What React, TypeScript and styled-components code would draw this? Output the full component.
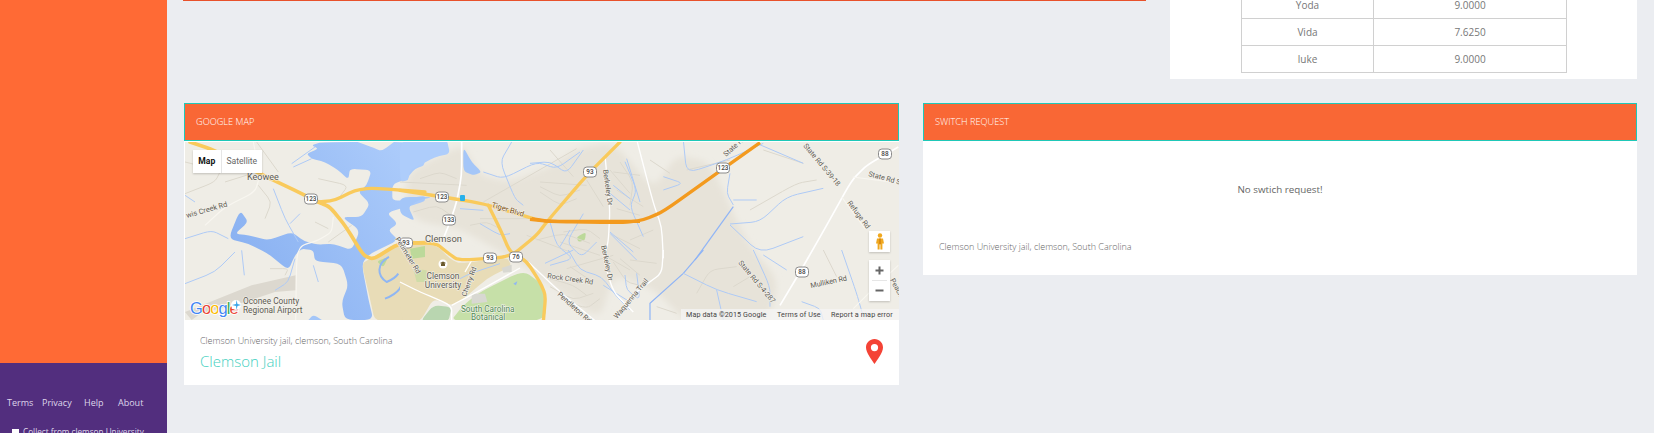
import React from "react";
import styled, { createGlobalStyle } from "styled-components";

const Global = createGlobalStyle`
  html, body { margin: 0; padding: 0; height: 100%; overflow: hidden; background: #ebedf1; }
  body { font-family: "Open Sans", "Liberation Sans", sans-serif; }
`;

const Page = styled.div`
  display: flex;
  width: 1654px;
  height: 433px;
  overflow: hidden;
  background: #ebedf1;
`;
const Sidebar = styled.aside`
  width: 167px;
  flex: none;
  display: flex;
  flex-direction: column;
`;
const SideFill = styled.div`
  flex: 1;
  background: #ff6a35;
`;
const SideFoot = styled.div`
  height: 70px;
  flex: none;
  background: #522e7e;
  color: #ded6ea;
  font-size: 9px;
  overflow: hidden;
`;
const FootLinks = styled.div`
  display: flex;
  padding: 33px 0 0 7px;
  line-height: 14px;
`;
const FootLink = styled.span<{ $w: number }>`
  width: ${(p) => p.$w}px;
  flex: none;
`;
const Collect = styled.div`
  display: flex;
  align-items: center;
  gap: 4px;
  padding: 15px 0 0 12px;
  font-size: 8.2px;
  line-height: 14px;
  white-space: nowrap;
`;
const Tick = styled.span`
  width: 7px;
  height: 6px;
  background: #fff;
`;
const Main = styled.main`
  flex: 1;
  min-width: 0;
  padding: 0 17px 0 17px;
  display: flex;
  flex-direction: column;
  gap: 24px;
`;
const TopRow = styled.div`
  display: flex;
  justify-content: space-between;
  height: 79px;
  flex: none;
`;
const TopPanel = styled.div`
  width: 963px;
  height: 1px;
  margin-left: -1px;
  background: #e8512b;
`;
const ScoreCard = styled.section`
  width: 467px;
  height: 79px;
  background: #fff;
  overflow: hidden;
`;
const Scores = styled.table`
  border-collapse: collapse;
  table-layout: fixed;
  width: 326px;
  margin: -9px 0 0 71px;
  font-size: 10px;
  color: #777;
  td {
    border: 1px solid #d0d0d0;
    height: 26px;
    padding: 0;
    text-align: center;
  }
`;
const Panels = styled.div`
  display: grid;
  grid-template-columns: 715px 714px;
  column-gap: 24px;
  align-items: start;
`;
const Panel = styled.section`
  background: #fff;
`;
const PanelHead = styled.header`
  height: 38px;
  box-sizing: border-box;
  border: 1px solid #1fc8b8;
  background: #f96735;
  color: #fff;
  font-size: 9.2px;
  font-weight: 300;
  line-height: 36px;
  padding-left: 11px;
`;
const MapBox = styled.div`
  position: relative;
  height: 178px;
  margin: 1px 0 0 1px;
  overflow: hidden;
  background: #efede6;
`;
const MapSvg = styled.svg`
  display: block;
  width: 714px;
  height: 178px;
`;
const MapType = styled.div`
  position: absolute;
  left: 8px;
  top: 8px;
  width: 69px;
  height: 23px;
  display: flex;
  background: #fff;
  box-shadow: 0 1px 2px rgba(0, 0, 0, 0.2);
  font-family: Roboto, sans-serif;
  font-size: 8.6px;
  line-height: 23px;
  text-align: center;
`;
const MapTab = styled.span<{ $active?: boolean }>`
  color: ${(p) => (p.$active ? "#111" : "#666")};
  font-weight: ${(p) => (p.$active ? 700 : 400)};
  width: ${(p) => (p.$active ? 28 : 41)}px;
  ${(p) => (p.$active ? "border-right: 1px solid #e6e6e6;" : "")}
`;
const MapButton = styled.div`
  position: absolute;
  left: 684px;
  top: 89px;
  width: 21px;
  height: 21px;
  background: #fff;
  box-shadow: 0 1px 2px rgba(0, 0, 0, 0.2);
  display: flex;
  align-items: center;
  justify-content: center;
`;
const ZoomBox = styled.div`
  position: absolute;
  left: 684px;
  top: 118px;
  width: 21px;
  height: 41px;
  background: #fff;
  box-shadow: 0 1px 2px rgba(0, 0, 0, 0.2);
  display: flex;
  flex-direction: column;
  align-items: center;
  justify-content: space-around;
  &::after {
    content: "";
    position: absolute;
    left: 3px;
    right: 3px;
    top: 20px;
    height: 1px;
    background: #e6e6e6;
  }
`;
const Attribution = styled.div`
  position: absolute;
  right: 0;
  bottom: 0;
  height: 11px;
  width: 218px;
  background: rgba(245, 245, 245, 0.72);
  display: flex;
  font-family: Roboto, sans-serif;
  font-size: 7.2px;
  line-height: 11px;
  color: #444;
  white-space: nowrap;
  letter-spacing: 0.1px;
`;
const AttrItem = styled.span<{ $w: number }>`
  width: ${(p) => p.$w}px;
  padding-left: 5px;
  box-sizing: border-box;
  flex: none;
`;
const MapFoot = styled.div`
  height: 65px;
  display: flex;
  justify-content: space-between;
  padding: 14px 16px 0 16px;
  box-sizing: border-box;
`;
const Address = styled.div`
  font-size: 9px;
  font-weight: 300;
  color: #666;
  line-height: 14px;
`;
const PlaceName = styled.div`
  font-size: 15px;
  font-weight: 300;
  color: #3fd0c0;
  line-height: 22px;
  margin-top: 2px;
`;
const Pin = styled.svg`
  width: 17px;
  height: 25px;
  margin-top: 5px;
`;
const SwitchBody = styled.div`
  height: 134px;
  padding: 0 16px;
  box-sizing: border-box;
  display: flex;
  flex-direction: column;
`;
const EmptyNote = styled.div`
  height: 97px;
  line-height: 98px;
  text-align: center;
  font-size: 9.8px;
  color: #666;
`;
const SwitchAddress = styled(Address)`
  margin-top: 2px;
`;

/* Rounds the corners of a polyline so map features read as organic shapes. */
const K = 0.3;
const smooth = (d: string) =>
  d
    .split(/(?=M)/)
    .map((sub) => {
      const closed = /Z\s*$/.test(sub);
      const pts = (sub.match(/-?[\d.]+,-?[\d.]+/g) || []).map((s) => s.split(",").map(Number));
      if (pts.length < 3) return sub;
      const toward = (a: number[], b: number[]) => `${a[0] + (b[0] - a[0]) * K},${a[1] + (b[1] - a[1]) * K}`;
      const n = pts.length;
      if (closed) {
        let out = `M${toward(pts[0], pts[n - 1])}`;
        pts.forEach((p, i) => {
          const next = pts[(i + 1) % n];
          const prev = pts[(i + n - 1) % n];
          out += ` L${toward(p, prev)} Q${p[0]},${p[1]} ${toward(p, next)}`;
        });
        return out + " Z";
      }
      let out = `M${pts[0][0]},${pts[0][1]}`;
      for (let i = 1; i < n - 1; i++) {
        out += ` L${toward(pts[i], pts[i - 1])} Q${pts[i][0]},${pts[i][1]} ${toward(pts[i], pts[i + 1])}`;
      }
      return out + ` L${pts[n - 1][0]},${pts[n - 1][1]}`;
    })
    .join(" ");

const P = ({ d, ...rest }: React.SVGProps<SVGPathElement> & { d: string }) => <path d={smooth(d)} {...rest} />;

const Z = ({ x, y, children }: { x: number; y: number; children: React.ReactNode }) => (
  <g transform={`translate(${x} ${y}) scale(0.3333)`}>{children}</g>
);

const Lbl = ({ x, y, r = 0, s = 7.4, c = "#5d5a52", children, a }: { x: number; y: number; r?: number; s?: number; c?: string; a?: "middle" | "start"; children: React.ReactNode }) => (
  <text x={x} y={y} fontFamily="Roboto, sans-serif" fontSize={s} fill={c} textAnchor={a || "start"} transform={r ? `rotate(${r} ${x} ${y})` : undefined} stroke="#f4f2ec" strokeWidth="1.2" paintOrder="stroke">
    {children}
  </text>
);

const Shield = ({ x, y, t }: { x: number; y: number; t: string }) => (
  <g>
    <rect x={x - 6.5} y={y - 5} width="13" height="10" rx="3.4" fill="#fff" stroke="#8a8a8a" strokeWidth="1" />
    <text x={x} y={y + 2.4} textAnchor="middle" fontFamily="Roboto, sans-serif" fontSize="6.4" fontWeight="500" fill="#444">{t}</text>
  </g>
);

const StreetMap = () => (
  <MapSvg viewBox="185 142 714 178">
    <defs>
      <linearGradient id="lake" x1="0" y1="0.7" x2="1" y2="0.1">
        <stop offset="0" stopColor="#88b0f1" />
        <stop offset="1" stopColor="#aecdfb" />
      </linearGradient>
      <filter id="soft" x="-10%" y="-10%" width="120%" height="120%">
        <feGaussianBlur stdDeviation="10" />
      </filter>
    </defs>
    <rect x="185" y="142" width="714" height="178" fill="#efede6" />
    {/* built up areas */}
    <Z x={400} y={142}>
      <g filter="url(#soft)">
        <P d="M20,95 L110,45 L190,10 L240,100 L330,120 L460,70 L530,20 L640,0 L760,140 L830,40 L930,60 L1040,300 L1140,420 L1080,600 L860,540 L760,440 L640,400 L600,534 L440,420 L330,345 L180,260 L60,240 L20,200 Z" fill="#e7e3d9" />
        <P d="M230,60 L320,0 L500,0 L420,70 L320,120 Z" fill="#efede6" />
      </g>
    </Z>
    <Z x={185} y={142}>
      <path d="M0,510 L200,430 L332,400 L332,445 L270,450 L150,490 L50,512 L20,534 Z" fill="#dcd8cf" />
    </Z>
    {/* water */}
    <Z x={185} y={142}>
      <P d="M380,10 L410,0 L720,0 L720,70 L690,80 L665,110 L622,128 L622,180 L720,160 L720,178 L680,190 L605,212 L638,245 L610,265 L640,295 L555,335 L530,365 L550,470 L565,534 L480,534 L470,480 L490,430 L470,365 L390,358 L385,325 L350,320 L330,340 L310,385 L250,335 L190,305 L130,290 L165,205 L190,240 L150,275 L190,280 L250,295 L320,270 L358,298 L400,308 L445,305 L500,325 L525,265 L470,225 L530,225 L555,185 L520,150 L545,130 L560,85 L495,80 L490,112 L460,85 L420,60 L380,50 L365,35 L400,20 Z" fill="url(#lake)" />
      <P d="M490,-10 L560,15 L590,28 L640,-10 Z" fill="#efede6" />
      <P d="M365,540 L385,518 L420,540 Z" fill="#a4c6f8" />
    </Z>
    <Z x={400} y={142}>
      <P d="M0,-10 L140,-10 L150,35 L105,45 L60,70 L30,85 L25,115 L0,120 Z" fill="#aecdfb" />
      <P d="M190,15 L215,60 L245,90 L222,100 L190,88 Z" fill="#a4c6f8" />
      <P d="M0,165 L100,165 L55,175 L25,195 L45,238 L0,215 Z" fill="#a4c6f8" />
    </Z>
    {/* university and gardens */}
    <Z x={185} y={142}>
      <P d="M530,365 L555,350 L640,300 L720,300 L720,540 L570,540 L555,470 Z" fill="#e8dcb7" />
      <P d="M575,358 L610,345 L595,376 Z" fill="#bcd99a" />
      <path d="M675,318 L720,310 L720,345 L680,350 Z" fill="#bcd99a" />
      <path d="M690,360 L712,358 L712,372 L692,374 Z" fill="#bcd99a" />
      <path d="M612,345 C575,365 575,400 605,420 C630,410 640,395 640,395 M650,400 C660,430 640,455 600,470" fill="none" stroke="#8fb6f3" strokeWidth="6" />
    </Z>
    <Z x={400} y={142}>
      <P d="M0,300 L110,310 L150,350 L180,365 L320,345 L335,372 L260,410 L180,480 L155,490 L100,470 L60,540 L0,540 Z" fill="#e8dcb7" />
      <P d="M190,490 L240,450 L370,385 L430,430 L440,540 L150,540 Z" fill="#c6e0a8" />
      <P d="M60,540 L100,490 L155,495 L145,540 Z" fill="#b9d6b0" />
      <path d="M30,320 L75,312 L75,345 L35,350 Z" fill="#bcd99a" />
      <path d="M40,380 L80,385 L80,420 L50,420 Z" fill="#cfdca8" />
      <path d="M215,455 L255,455 L262,480 L215,485 Z" fill="#d8d8d2" />
      <path d="M305,378 L335,368 L335,390 L310,392 Z" fill="#d8d8d2" />
      <P d="M530,285 L558,270 L555,295 L535,300 Z" fill="#bcd99a" />
      <path d="M340,425 L352,418 L348,430 Z" fill="#8fb6f3" />
    </Z>
    {/* thin terrain lines and neighbourhood streets */}
    <g fill="none" stroke="#dcd8cd" strokeWidth="3">
      <Z x={185} y={142}>
        <P d="M215,0 L280,90 M0,155 L90,120 L110,80 M400,110 L490,130 L460,170 M220,130 L260,180 L240,230 M390,240 L430,260 M255,380 L310,380 L300,400 M0,60 L80,80 M120,120 L200,95 M430,300 L500,250" />
      </Z>
      <Z x={400} y={142}>
        <P d="M0,120 L200,130 M250,180 L530,20 M240,230 L400,230 M420,120 L560,130 M480,300 L600,340 M500,380 L640,340 M640,90 L720,100 M650,200 L720,220 M380,280 L510,330 M640,280 L720,320 M660,350 L720,400" />
        <P d="M60,110 L120,90 L170,110 M40,210 L110,190 L160,225 M210,250 L260,240 L300,260 M420,150 L480,190 L530,170 M490,270 L560,260 L600,290 M450,410 L520,430 L560,460 M480,470 L560,500 L600,470 M660,60 L700,120 L690,190 M640,360 L680,420 L720,430" />
      </Z>
      <Z x={530} y={130}>
        <P d="M470,120 L600,90 M660,240 L800,160 L860,150 M700,60 L820,100 M240,120 L300,190 M60,60 L130,140 M360,90 L420,130" />
        <P d="M30,170 L90,200 L150,180 M170,150 L220,230 M260,180 L340,230 M20,330 L100,310 L180,340 M300,330 L370,300" />
      </Z>
      <Z x={530} y={250}>
        <P d="M500,130 L540,60 L620,50 M610,110 L660,80 M920,80 L880,0 M380,170 L440,190" />
        <P d="M60,110 L130,150 L190,130 M120,50 L180,90 M230,20 L300,60 M300,30 L380,40" />
      </Z>
    </g>
    {/* streams */}
    <g fill="none" stroke="#aecaf6" strokeWidth="3">
      <Z x={185} y={142}>
        <P d="M320,65 L390,15 M325,75 L380,50 M265,140 L300,230 L340,300 M345,215 L315,245 M170,325 L178,400 M0,290 L80,265 L130,290 M0,425 L90,390 L150,330 M385,370 L400,420 M270,445 L310,420 L330,350 M0,160 L30,180" />
      </Z>
      <Z x={400} y={142}>
        <P d="M250,90 L310,110 L410,60 L470,80 L540,30 M335,0 L300,60 L345,170 L370,190 M240,245 L300,280 L330,275 M180,200 L250,205 M450,240 L470,310 L520,350 L450,370 M550,215 L500,300 L545,345 L590,300 M180,410 L210,395 L300,365 M640,130 L690,170 M680,50 L720,180 M630,270 L700,330 M610,430 L690,480" />
      </Z>
      <Z x={530} y={130}>
        <P d="M0,100 L60,95 L110,130 L160,60 M285,95 L320,180 L300,230 L340,320 M240,190 L300,240 M400,140 L460,160 L400,180 M460,30 L470,130 L590,90 L700,40 M600,130 L590,190 L610,225 M610,210 L680,210 M600,282 L690,275 L770,200 L880,175 M600,285 L690,370 L820,320 M680,40 L820,100 M120,300 L90,350 M240,310 L320,390" />
        <path d="M495,390 L610,230" strokeWidth="3.6" stroke="#8fb4f6" />
      </Z>
      <Z x={530} y={250}>
        <path d="M520,0 L460,70 L360,160 L360,210" strokeWidth="3.6" stroke="#8fb4f6" />
        <P d="M460,70 L560,120 L680,155 M560,120 L580,210 M670,0 L720,110 L720,170 M700,15 L770,60 M815,155 L870,175 L880,210 M935,0 L980,130 L1000,200 M45,40 L130,0 M115,0 L150,60 L215,80 L260,140 L300,180 M285,75 L290,120 L330,150 L320,70" />
      </Z>
    </g>
    {/* minor white roads */}
    <g fill="none" stroke="#fff" strokeWidth="4">
      <Z x={400} y={142}>
        <P d="M185,0 L185,100 L170,180 L150,240 L130,290" strokeWidth="5" />
        <P d="M155,540 L155,490 L60,450 L0,420" />
        <P d="M155,490 L250,440 L360,378" />
        <P d="M385,360 L480,450 L590,540" />
        <P d="M615,40 L630,200 L625,300 L610,350 L640,450 L700,510" />
        <P d="M195,390 L215,355" />
      </Z>
      <Z x={530} y={130}>
        <P d="M322,36 L370,220 L395,290 L400,385" />
      </Z>
      <Z x={530} y={250}>
        <P d="M400,0 L395,70 L340,110 L290,150 L265,205" />
      </Z>
      <Z x={185} y={142}>
        <P d="M205,0 L225,100 L210,150 L120,195 L60,250 M445,225 L440,270 L400,295 L350,310 L335,340 L332,540" strokeWidth="3.5" stroke="#f8f6f0" />
      </Z>
      <Z x={780} y={142}>
        <P d="M0,490 L60,390 L140,250 L215,115 L260,70 L355,15" strokeWidth="5" />
        <P d="M218,105 L350,122 M185,165 L255,260 M220,500 L290,430 L355,370" strokeWidth="3.5" stroke="#f8f6f0" />
      </Z>
    </g>
    {/* highways */}
    <g fill="none" stroke="#f9ca5c" strokeLinejoin="round" strokeLinecap="round">
      <Z x={185} y={142}>
        <P d="M15,0 L85,24 L235,100 L330,145 L400,180 L435,195 L480,250 L535,340 L565,352 L640,305 L720,302" strokeWidth="11" />
        <P d="M400,180 L450,175 L510,145 L560,138 L720,150" strokeWidth="10" />
      </Z>
      <Z x={400} y={142}>
        <P d="M0,145 L130,165 L250,185 L400,230" strokeWidth="10" />
        <P d="M265,190 L300,260 L330,330 L380,358 L420,420 L437,460 L430,540" strokeWidth="10" />
        <P d="M0,300 L110,305 L140,330 L175,355 L330,345 L410,280 L440,240 L560,100 L660,0" strokeWidth="10" />
      </Z>
    </g>
    <Z x={400} y={142}>
      <P d="M395,230 L450,238 L720,238" fill="none" stroke="#f39a1e" strokeWidth="10" />
    </Z>
    <Z x={530} y={130}>
      <P d="M0,268 L60,275 L280,278 L340,270 L400,245 L560,130 L690,38" fill="none" stroke="#f39a1e" strokeWidth="10" />
    </Z>
    {/* shields */}
    <Shield x={311} y={199} t="123" />
    <Shield x={442} y={197} t="123" />
    <Shield x={406} y={243} t="93" />
    <Shield x={490} y={258} t="93" />
    <Shield x={449} y={220} t="133" />
    <Shield x={516} y={257} t="76" />
    <Shield x={590} y={172} t="93" />
    <Shield x={723} y={168} t="123" />
    <Shield x={802} y={272} t="88" />
    <Shield x={885} y={154} t="88" />
    <rect x="460" y="195" width="5" height="6" rx="1" fill="#29b0ea" />
    {/* labels */}
    <Lbl x={247} y={180} s={9}>Keowee</Lbl>
    <Lbl x={187} y={218} r={-16}>wis Creek Rd</Lbl>
    <Lbl x={425} y={242} s={9.4}>Clemson</Lbl>
    <Lbl x={443} y={279} s={8.4} a="middle">Clemson</Lbl>
    <Lbl x={443} y={287.5} s={8.4} a="middle">University</Lbl>
    <Lbl x={243} y={304} s={8.3}>Oconee County</Lbl>
    <Lbl x={243} y={312.5} s={8.3}>Regional Airport</Lbl>
    <Lbl x={395} y={239} r={58} s={7.2}>Perimeter Rd</Lbl>
    <Lbl x={466} y={297} r={-70} s={7.2}>Cherry Rd</Lbl>
    <Lbl x={491} y={207} r={17} s={7.6} c="#7a4f10">Tiger Blvd</Lbl>
    <Lbl x={461} y={312} s={8.2} c="#4f8a53">South Carolina</Lbl>
    <Lbl x={471} y={320} s={8.2} c="#4f8a53">Botanical</Lbl>
    <Lbl x={547} y={278} r={8} s={7.2}>Rock Creek Rd</Lbl>
    <Lbl x={557} y={295} r={42} s={7.2}>Pendleton Rd</Lbl>
    <Lbl x={603} y={170} r={82} s={7.2}>Berkeley Dr</Lbl>
    <Lbl x={601} y={246} r={78} s={7.2}>Berkeley Dr</Lbl>
    <Lbl x={617} y={319} r={-50} s={7.2}>Waquenna Trail</Lbl>
    <Lbl x={726} y={157} r={-42} s={7.2}>State Rd</Lbl>
    <Lbl x={803} y={146} r={50} s={7.2}>State Rd S-39-18</Lbl>
    <Lbl x={868} y={176} r={15} s={7.2}>State Rd S</Lbl>
    <Lbl x={847} y={203} r={53} s={7.2}>Refuge Rd</Lbl>
    <Lbl x={738} y={263} r={50} s={7.2}>State Rd S-4-287</Lbl>
    <Lbl x={811} y={288} r={-12} s={7.2}>Mulliken Rd</Lbl>
    <Lbl x={890} y={280} r={62} s={7.2}>Peach</Lbl>
    <text x="190" y="314" fontFamily="'Liberation Sans', sans-serif" fontSize="16.5" stroke="#fff" strokeWidth="1.6" paintOrder="stroke" letterSpacing="-0.9">
      <tspan fill="#4285f4">G</tspan><tspan fill="#ea4335">o</tspan><tspan fill="#fbbc05">o</tspan><tspan fill="#4285f4">g</tspan><tspan fill="#34a853">l</tspan><tspan fill="#ea4335">e</tspan>
    </text>
    <circle cx="236" cy="305" r="5" fill="#fff" />
    <path d="M236.5,300 L237.5,304 L241,305 L237.5,306 L236.5,310 L236,306 L232,305 L236,304 Z" fill="#3aa6ea" />
    <circle cx="443" cy="264" r="4.5" fill="#fff" />
    <path d="M440,263 L443,261.5 L446,263 L443,264.5 Z M441,264 L445,264 L445,266 L441,266 Z" fill="#6b5a2e" />
  </MapSvg>
);

const rows = [
  ["Yoda", "9.0000"],
  ["Vida", "7.6250"],
  ["luke", "9.0000"],
];

export default function App() {
  return (
    <Page>
      <Global />
      <Sidebar>
        <SideFill />
        <SideFoot>
          <FootLinks>
            <FootLink $w={35}>Terms</FootLink>
            <FootLink $w={42}>Privacy</FootLink>
            <FootLink $w={34}>Help</FootLink>
            <FootLink $w={30}>About</FootLink>
          </FootLinks>
          <Collect>
            <Tick />
            Collect from clemson University
          </Collect>
        </SideFoot>
      </Sidebar>
      <Main>
        <TopRow>
          <TopPanel />
          <ScoreCard>
            <Scores>
              <colgroup>
                <col style={{ width: 132 }} />
                <col />
              </colgroup>
              <tbody>
                {rows.map(([n, v]) => (
                  <tr key={n}>
                    <td>{n}</td>
                    <td>{v}</td>
                  </tr>
                ))}
              </tbody>
            </Scores>
          </ScoreCard>
        </TopRow>
        <Panels>
          <Panel>
            <PanelHead>GOOGLE MAP</PanelHead>
            <MapBox>
              <StreetMap />
              <MapType>
                <MapTab $active>Map</MapTab>
                <MapTab>Satellite</MapTab>
              </MapType>
              <MapButton>
                <svg width="8" height="17" viewBox="0 0 8 17">
                  <circle cx="4" cy="2.5" r="2.2" fill="#f0a81e" />
                  <path d="M1,5.5 H7 L8,10.5 H6.4 V16.5 H4.4 V11.5 H3.6 V16.5 H1.6 V10.5 H0 Z" fill="#f0a81e" />
                  <path d="M3,5.5 H5 V11 H3 Z" fill="#d98a12" />
                </svg>
              </MapButton>
              <ZoomBox>
                <svg width="11" height="11" viewBox="0 0 11 11">
                  <path d="M5.5,1.5 V9.5 M1.5,5.5 H9.5" stroke="#666" strokeWidth="2" />
                </svg>
                <svg width="11" height="11" viewBox="0 0 11 11">
                  <path d="M1.5,5.5 H9.5" stroke="#666" strokeWidth="2" />
                </svg>
              </ZoomBox>
              <Attribution>
                <AttrItem $w={91}>Map data ©2015 Google</AttrItem>
                <AttrItem $w={54}>Terms of Use</AttrItem>
                <AttrItem $w={73}>Report a map error</AttrItem>
              </Attribution>
            </MapBox>
            <MapFoot>
              <div>
                <Address>Clemson University jail, clemson, South Carolina</Address>
                <PlaceName>Clemson Jail</PlaceName>
              </div>
              <Pin viewBox="0 0 17 25">
                <path fillRule="evenodd" d="M8.5,0 C13.2,0 17,3.7 17,8.4 C17,13.5 11,21 8.5,25 C6,21 0,13.5 0,8.4 C0,3.7 3.8,0 8.5,0 Z M8.5,5 A3.6,3.6 0 1 0 8.5,12.2 A3.6,3.6 0 1 0 8.5,5 Z" fill="#f44336" />
              </Pin>
            </MapFoot>
          </Panel>
          <Panel>
            <PanelHead>SWITCH REQUEST</PanelHead>
            <SwitchBody>
              <EmptyNote>No swtich request!</EmptyNote>
              <SwitchAddress>Clemson University jail, clemson, South Carolina</SwitchAddress>
            </SwitchBody>
          </Panel>
        </Panels>
      </Main>
    </Page>
  );
}
